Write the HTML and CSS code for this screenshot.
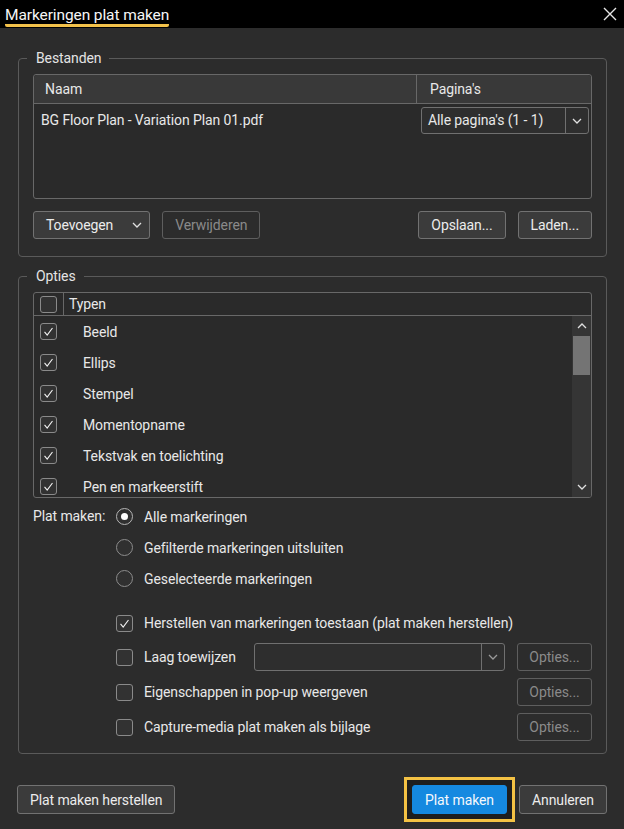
FILE: index.html
```html
<!DOCTYPE html>
<html lang="nl">
<head>
    <meta charset="UTF-8">
    <meta name="viewport" content="width=device-width, initial-scale=1.0">
    <link rel="stylesheet" href="styles.css">
    <title>Markeringen plat maken</title>
</head>
<body>
    <div class="titlebar">
        <span class="title">Markeringen plat maken</span>
        <svg class="close" width="14" height="14" viewBox="0 0 14 14"><path d="M1 1L13 13M13 1L1 13"/></svg>
    </div>

    <div class="content">
        <fieldset class="group files">
            <legend>Bestanden</legend>
            <div class="file-table">
                <div class="file-head">
                    <div class="col-name">Naam</div>
                    <div class="col-pages">Pagina's</div>
                </div>
                <div class="file-row">
                    <div class="col-name">BG Floor Plan - Variation Plan 01.pdf</div>
                    <div class="col-pages">
                        <div class="combo">
                            <span class="combo-value">Alle pagina's (1 - 1)</span>
                            <span class="combo-arrow"><svg class="chevron" width="10" height="6" viewBox="0 0 10 6"><path d="M1 1L5 5L9 1"/></svg></span>
                        </div>
                    </div>
                </div>
            </div>
            <div class="button-row">
                <button class="btn btn-menu">Toevoegen <svg class="chevron" width="10" height="6" viewBox="0 0 10 6"><path d="M1 1L5 5L9 1"/></svg></button>
                <button class="btn" disabled>Verwijderen</button>
                <button class="btn push">Opslaan...</button>
                <button class="btn">Laden...</button>
            </div>
        </fieldset>

        <fieldset class="group options">
            <legend>Opties</legend>
            <div class="type-list">
                <div class="type-head">
                    <span class="head-check"><span class="check"></span></span>
                    <span class="head-label">Typen</span>
                </div>
                <div class="type-body">
                    <div class="type-rows">
                        <div class="type-row"><span class="check on"><svg viewBox="0 0 17 17"><path d="M4 9L7 12.5L13 4.5"/></svg></span>Beeld</div>
                        <div class="type-row"><span class="check on"><svg viewBox="0 0 17 17"><path d="M4 9L7 12.5L13 4.5"/></svg></span>Ellips</div>
                        <div class="type-row"><span class="check on"><svg viewBox="0 0 17 17"><path d="M4 9L7 12.5L13 4.5"/></svg></span>Stempel</div>
                        <div class="type-row"><span class="check on"><svg viewBox="0 0 17 17"><path d="M4 9L7 12.5L13 4.5"/></svg></span>Momentopname</div>
                        <div class="type-row"><span class="check on"><svg viewBox="0 0 17 17"><path d="M4 9L7 12.5L13 4.5"/></svg></span>Tekstvak en toelichting</div>
                        <div class="type-row"><span class="check on"><svg viewBox="0 0 17 17"><path d="M4 9L7 12.5L13 4.5"/></svg></span>Pen en markeerstift</div>
                    </div>
                    <div class="scrollbar">
                        <span class="scroll-btn"><svg class="chevron" width="10" height="6" viewBox="0 0 10 6"><path d="M1 5L5 1L9 5"/></svg></span>
                        <span class="scroll-thumb"></span>
                        <span class="scroll-track"></span>
                        <span class="scroll-btn"><svg class="chevron" width="10" height="6" viewBox="0 0 10 6"><path d="M1 1L5 5L9 1"/></svg></span>
                    </div>
                </div>
            </div>

            <div class="flatten">
                <div class="flatten-label">Plat maken:</div>
                <div class="radios">
                    <div class="radio-row"><span class="radio on"></span>Alle markeringen</div>
                    <div class="radio-row"><span class="radio"></span>Gefilterde markeringen uitsluiten</div>
                    <div class="radio-row"><span class="radio"></span>Geselecteerde markeringen</div>
                </div>
            </div>

            <div class="extra">
                <div class="opt-row first">
                    <span class="check on"><svg viewBox="0 0 17 17"><path d="M4 9L7 12.5L13 4.5"/></svg></span>
                    <span class="opt-label">Herstellen van markeringen toestaan (plat maken herstellen)</span>
                </div>
                <div class="opt-row">
                    <span class="check"></span>
                    <span class="opt-label">Laag toewijzen</span>
                    <div class="combo layer-combo">
                        <span class="combo-value"></span>
                        <span class="combo-arrow"><svg class="chevron dim" width="10" height="6" viewBox="0 0 10 6"><path d="M1 1L5 5L9 1"/></svg></span>
                    </div>
                    <button class="btn btn-small" disabled>Opties...</button>
                </div>
                <div class="opt-row">
                    <span class="check"></span>
                    <span class="opt-label">Eigenschappen in pop-up weergeven</span>
                    <button class="btn btn-small" disabled>Opties...</button>
                </div>
                <div class="opt-row">
                    <span class="check"></span>
                    <span class="opt-label">Capture-media plat maken als bijlage</span>
                    <button class="btn btn-small" disabled>Opties...</button>
                </div>
            </div>
        </fieldset>
    </div>

    <div class="footer">
        <button class="btn">Plat maken herstellen</button>
        <span class="focus-frame"><button class="btn primary">Plat maken</button></span>
        <button class="btn">Annuleren</button>
    </div>
</body>
</html>
```

FILE: styles.css
```css
* {
    box-sizing: border-box;
}

body {
    margin: 0;
    width: 624px;
    height: 829px;
    overflow: hidden;
    background: #2c2c2c;
    color: #e8e8e8;
    font-family: Roboto, "Liberation Sans", sans-serif;
    font-size: 14px;
    letter-spacing: -0.1px;
}

/* title bar */
.titlebar {
    height: 28px;
    background: #000;
    display: flex;
    align-items: flex-end;
    justify-content: space-between;
    padding: 0 7px 1px 5px;
}

.title {
    font-size: 15.5px;
    line-height: 18px;
    color: #f6f6f6;
    border-bottom: 3px solid #f2c14a;
    border-radius: 2px;
}

.close {
    align-self: center;
    margin-bottom: -1px;
    fill: none;
    stroke: #e6e6e6;
    stroke-width: 1.4;
}

.content {
    padding: 0 17px 0 18px;
}

/* group boxes */
.group {
    margin: 22px 0 0;
    padding: 8px 14px 17px;
    border: 1px solid #5a5a5a;
    border-radius: 4px;
    min-width: 0;
}

.group.options {
    margin-top: 11px;
    padding-bottom: 12px;
}

.group legend {
    margin-left: -6px;
    padding: 0 8px 0 9px;
    line-height: 16px;
    color: #e4e4e4;
}

.chevron {
    fill: none;
    stroke: #e0e0e0;
    stroke-width: 1.3;
}

.chevron.dim {
    stroke: #9a9a9a;
}

/* files table */
.file-table {
    height: 125px;
    border: 1px solid #686868;
    border-radius: 3px;
    background: #2a2a2a;
}

.file-head {
    display: flex;
    height: 29px;
    background: #393939;
    border-bottom: 1px solid #686868;
    border-radius: 3px 3px 0 0;
}

.file-head .col-name {
    flex: 1;
    padding-left: 11px;
    line-height: 28px;
}

.file-head .col-pages {
    width: 175px;
    padding-left: 13px;
    border-left: 1px solid #686868;
    line-height: 28px;
}

.file-row {
    display: flex;
    padding-top: 3px;
}

.file-row .col-name {
    flex: 1;
    padding-left: 7px;
    line-height: 27px;
}

.file-row .col-pages {
    width: 175px;
    padding: 0 2px 0 5px;
}

.combo {
    display: flex;
    height: 27px;
    border: 1px solid #707070;
    border-radius: 3px;
    background: #2e2e2e;
}

.combo-value {
    flex: 1;
    padding-left: 6px;
    line-height: 25px;
}

.combo-arrow {
    width: 23px;
    border-left: 1px solid #707070;
    display: flex;
    align-items: center;
    justify-content: center;
}

/* buttons */
.button-row {
    display: flex;
    gap: 12px;
    margin-top: 12px;
}

.btn {
    height: 28px;
    padding: 0 12px;
    border: 1px solid #727272;
    border-radius: 3px;
    background: #3b3b3b;
    color: #ececec;
    font: inherit;
    letter-spacing: inherit;
}

.btn:disabled {
    background: #2c2c2c;
    border-color: #5e5e5e;
    color: #8a8a8a;
}

.btn-menu {
    display: flex;
    align-items: center;
    padding: 0 7px 0 12px;
}

.btn-menu .chevron {
    margin-left: 19px;
}

.btn-small {
    width: 75px;
    padding: 0;
}

.push {
    margin-left: auto;
}

/* type list */
.type-list {
    height: 206px;
    display: flex;
    flex-direction: column;
    border: 1px solid #686868;
    border-radius: 3px;
    background: #2a2a2a;
    overflow: hidden;
}

.type-head {
    flex: none;
    display: flex;
    height: 23px;
    border-bottom: 1px solid #686868;
}

.head-check {
    width: 30px;
    display: flex;
    align-items: center;
    padding-left: 6px;
    border-right: 1px solid #686868;
}

.head-label {
    padding-left: 5px;
    line-height: 22px;
}

.type-body {
    flex: 1;
    display: flex;
    min-height: 0;
}

.type-rows {
    flex: 1;
    overflow: hidden;
}

.type-row {
    display: flex;
    align-items: center;
    height: 31px;
    padding-left: 6px;
}

.type-row .check {
    margin-right: 26px;
}

.check {
    flex: none;
    width: 17px;
    height: 17px;
    border: 1px solid #8a8a8a;
    border-radius: 3px;
    background: #323232;
}

.check svg {
    display: block;
    width: 15px;
    height: 15px;
    fill: none;
    stroke: #f2f2f2;
    stroke-width: 1.3;
}

.scrollbar {
    width: 19px;
    display: flex;
    flex-direction: column;
    background: #353535;
}

.scroll-btn {
    height: 20px;
    display: flex;
    align-items: center;
    justify-content: center;
}

.scroll-thumb {
    height: 39px;
    margin: 0 1px;
    background: #747474;
}

.scroll-track {
    flex: 1;
}

/* flatten mode */
.flatten {
    display: flex;
    margin-top: 3px;
}

.flatten-label {
    width: 83px;
    line-height: 31px;
}

.radio-row {
    display: flex;
    align-items: center;
    gap: 11px;
    height: 31px;
}

.radio {
    width: 17px;
    height: 17px;
    display: flex;
    align-items: center;
    justify-content: center;
    border: 1px solid #8c8c8c;
    border-radius: 50%;
    background: #303030;
}

.radio.on {
    border-color: #b4b4b4;
}

.radio.on::after {
    content: '';
    width: 7px;
    height: 7px;
    border-radius: 50%;
    background: #fff;
}

.extra {
    display: flex;
    flex-direction: column;
    gap: 7px;
    margin: 16px 0 0 83px;
}

.opt-row {
    display: flex;
    align-items: center;
    gap: 11px;
    height: 28px;
}

.opt-row.first {
    height: 26px;
}

.opt-label {
    flex: 1;
}

.layer-combo {
    width: 251px;
    height: 28px;
    margin-right: 1px;
}

/* footer */
.footer {
    display: flex;
    align-items: flex-start;
    gap: 12px;
    margin-top: 31px;
    padding: 0 17px;
}

.footer .btn {
    height: 29px;
}

.focus-frame {
    display: flex;
    margin: -8px -8px -8px auto;
    padding: 5px;
    border: 3px solid #f4c244;
    background: #1e1e1e;
}

.btn.primary {
    background: #1589e0;
    border-color: #1589e0;
    color: #f4f8fc;
}
```
